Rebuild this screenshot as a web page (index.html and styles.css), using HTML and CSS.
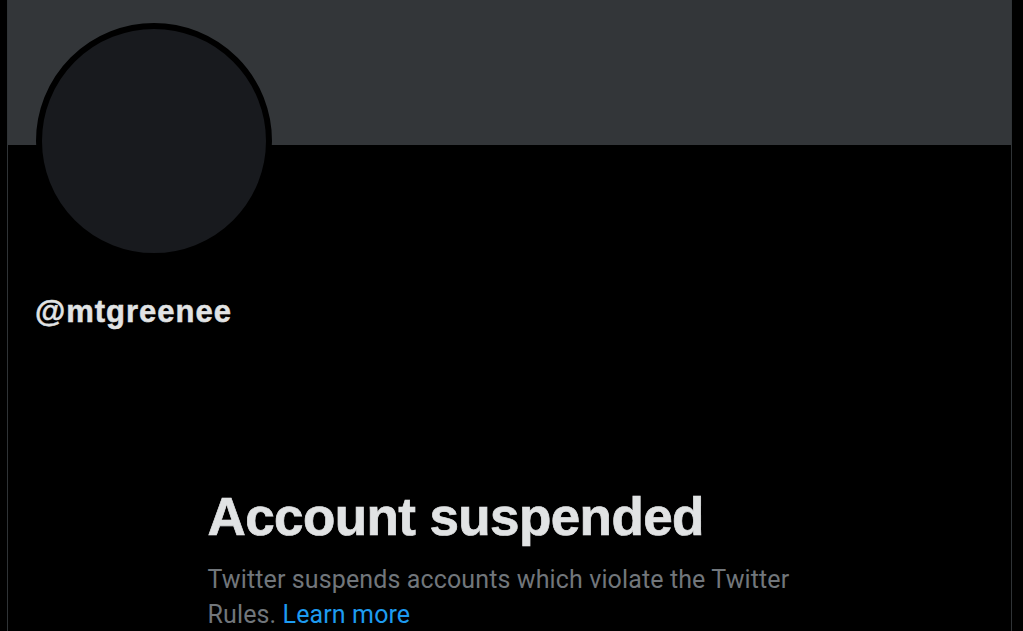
FILE: index.html
```html
<!DOCTYPE html>
<html lang="en">
<head>
  <meta charset="UTF-8">
  <title>@mtgreenee / Twitter</title>
  <link rel="stylesheet" href="styles.css">
</head>
<body>
  <div class="page">
    <div class="banner"></div>
    <div class="avatar"></div>
    <div class="handle">@mtgreenee</div>

    <div class="notice">
      <h1>Account suspended</h1>
      <p>Twitter suspends accounts which violate the Twitter Rules. <a href="#">Learn more</a></p>
    </div>
  </div>
</body>
</html>
```

FILE: styles.css
```css
body {
  margin: 0;
  background: #000;
  color: #e1e3e4;
  font-family: 'Liberation Sans', Arial, sans-serif;
  overflow: hidden;
}
.page {
  margin-left: 7px;
  width: 1003px;
  height: 100vh;
  border-left: 1px solid #2f3336;
  border-right: 1px solid #2f3336;
}
.banner {
  height: 145px;
  background: #333639;
}
.avatar {
  width: 224px;
  height: 224px;
  margin: -122px 0 0 28px;
  border: 6px solid #000;
  border-radius: 50%;
  background: #181a1e;
}
.handle {
  margin: 35px 0 0 27px;
  font-size: 31px;
  font-weight: bold;
  letter-spacing: 1px;
  -webkit-text-stroke: 0.5px #e1e3e4;
}
.notice {
  width: 604px;
  margin: 156px auto 0;
}
.notice h1 {
  margin: 0;
  font-size: 53px;
  line-height: 62px;
  font-weight: bold;
  letter-spacing: -0.6px;
  -webkit-text-stroke: 0.7px #e1e3e4;
}
.notice p {
  margin: 14px 0 0;
  font-family: Roboto, sans-serif;
  font-size: 25px;
  line-height: 35px;
  letter-spacing: 0.12px;
  color: #71767b;
}
.notice a {
  color: #1d9bf0;
  text-decoration: none;
}
```
